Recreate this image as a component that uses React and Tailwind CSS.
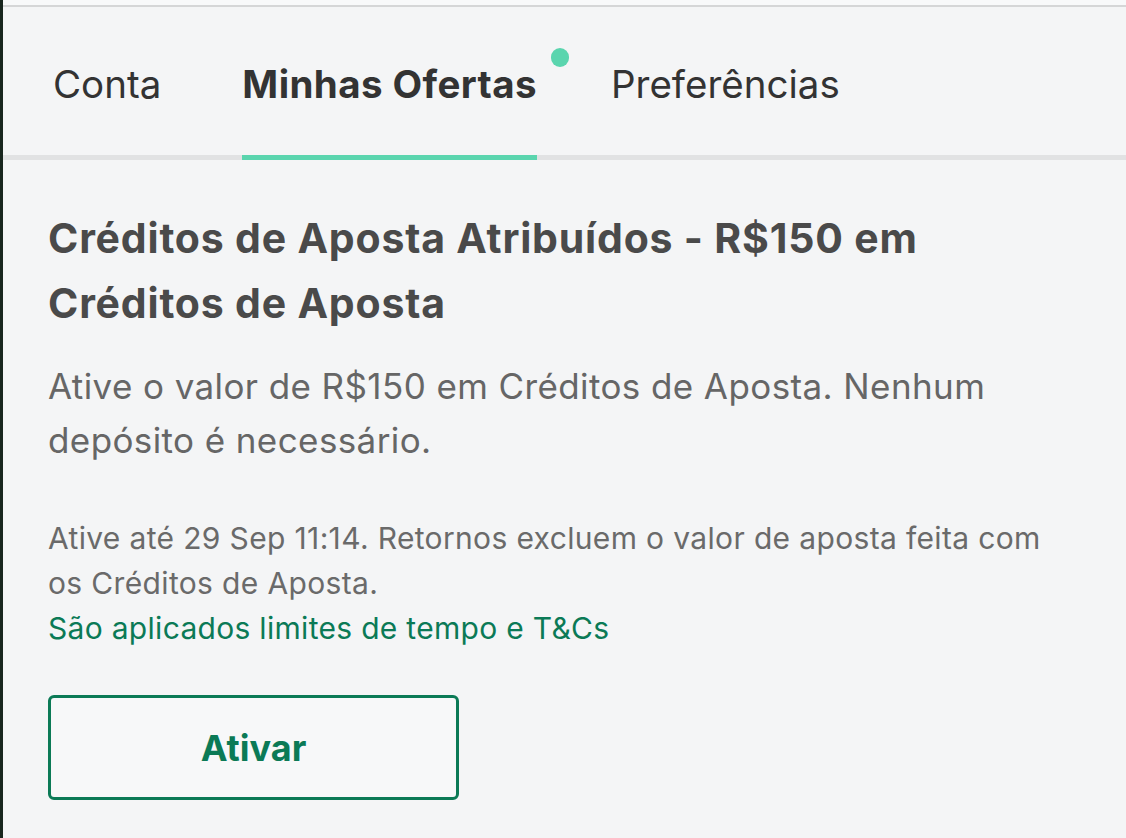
export default function App() {
  return (
    <div className="min-h-[838px] w-full bg-[#f4f5f6] border-l-[3px] border-[#18261e] font-['Inter','Noto_Sans',sans-serif]">
      {/* top strip */}
      <div className="h-[5px] bg-[#f8f9fa]" />
      <div className="h-[2px] bg-[#d5d6d7]" />

      {/* Tabs */}
      <div className="flex items-stretch h-[153px] border-b-[5px] border-[#e1e2e3] pl-[50px] text-[38.5px] pt-[8px]">
        <div className="flex items-center text-[#333333]">Conta</div>
        <div className="relative ml-[81px] flex items-center -mb-[5px] border-b-[5px] border-[#5ad5ae] font-bold tracking-[0.4px] text-[#333333]">
          Minhas Ofertas
          <span className="absolute right-[-32px] top-[33px] w-[18px] h-[19px] rounded-full bg-[#5ad5ae]" />
        </div>
        <div className="ml-[74px] flex items-center text-[#333333]">Preferências</div>
      </div>

      {/* Content */}
      <div className="pl-[45px] pr-[40px] pt-[46px]">
        <h1 className="text-[41px] leading-[65px] font-bold tracking-[0.8px] text-[#4a4a4a] max-w-[960px]">
          Créditos de Aposta Atribuídos - R$150 em Créditos de Aposta
        </h1>
        <p className="mt-[23px] text-[35px] leading-[54px] tracking-[0.4px] text-[#666666] max-w-[1010px]">
          Ative o valor de R$150 em Créditos de Aposta. Nenhum depósito é necessário.
        </p>
        <p className="mt-[49px] text-[30px] leading-[45px] tracking-[0.35px] text-[#6a6a6a] max-w-[1030px]">
          Ative até 29 Sep 11:14. Retornos excluem o valor de aposta feita com os Créditos de Aposta.
        </p>
        <a className="block text-[30px] leading-[45px] tracking-[0.3px] text-[#0b7a56]">
          São aplicados limites de tempo e T&amp;Cs
        </a>
        <button className="mt-[44px] w-[411px] h-[105px] rounded-[6px] border-[3px] border-[#0b7a56] bg-[#f7f8f9] text-[36px] font-bold text-[#0b7a56]">
          Ativar
        </button>
      </div>
    </div>
  )
}
